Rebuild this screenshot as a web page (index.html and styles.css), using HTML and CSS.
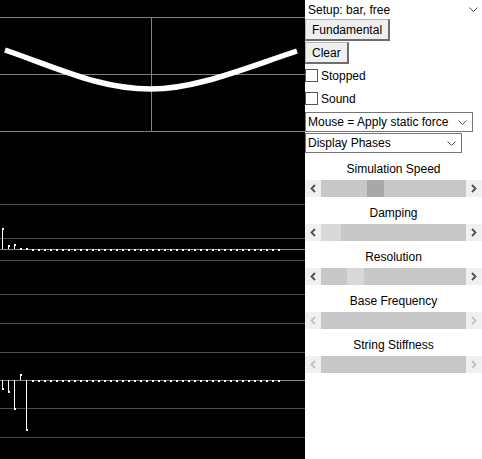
FILE: index.html
```html
<!DOCTYPE html>
<html lang="en">
  <head>
    <meta charset="UTF-8" />
    <title>Bar Waves</title>
    <link rel="stylesheet" href="styles.css">
  </head>
  <body>
    <div class="app">
      <svg class="view" width="305" height="459" viewBox="0 0 305 459" shape-rendering="crispEdges">
        <defs>
          <pattern id="dots" x="32" y="0" width="6" height="2" patternUnits="userSpaceOnUse">
            <rect x="0" y="0" width="2" height="2" fill="#fff" />
          </pattern>
        </defs>
        <rect width="305" height="459" fill="#000" />

        <!-- string view -->
        <rect x="0" y="17" width="305" height="1" fill="#808080" />
        <rect x="0" y="74" width="305" height="1" fill="#808080" />
        <rect x="0" y="131" width="305" height="1" fill="#808080" />
        <rect x="151" y="17" width="1" height="114" fill="#808080" />
        <path shape-rendering="auto" fill="none" stroke="#fff" stroke-width="5.5"
          d="M5 50 C60 69 100 89 151 89 C195 89 240 70 297 51" />

        <!-- magnitudes -->
        <rect x="0" y="204" width="305" height="1" fill="#4c4c4c" />
        <rect x="0" y="238" width="305" height="1" fill="#4c4c4c" />
        <rect x="0" y="260" width="305" height="1" fill="#4c4c4c" />
        <rect x="0" y="294" width="305" height="1" fill="#4c4c4c" />
        <rect x="0" y="249" width="305" height="1" fill="#8a8a8a" />
        <rect x="32" y="249" width="248" height="2" fill="url(#dots)" />
        <rect x="2" y="228" width="1" height="21" fill="#fff" />
        <rect x="2" y="228" width="2" height="2" fill="#fff" />
        <rect x="8" y="245" width="1" height="4" fill="#fff" />
        <rect x="8" y="245" width="2" height="2" fill="#fff" />
        <rect x="14" y="244" width="1" height="5" fill="#fff" />
        <rect x="14" y="244" width="2" height="2" fill="#fff" />
        <rect x="20" y="248" width="2" height="2" fill="#fff" />
        <rect x="26" y="248" width="2" height="2" fill="#fff" />

        <!-- phases -->
        <rect x="0" y="323" width="305" height="1" fill="#4c4c4c" />
        <rect x="0" y="352" width="305" height="1" fill="#4c4c4c" />
        <rect x="0" y="408" width="305" height="1" fill="#4c4c4c" />
        <rect x="0" y="437" width="305" height="1" fill="#4c4c4c" />
        <rect x="0" y="380" width="305" height="1" fill="#8a8a8a" />
        <rect x="32" y="380" width="248" height="2" fill="url(#dots)" />
        <rect x="2" y="380" width="1" height="9" fill="#fff" />
        <rect x="2" y="388" width="2" height="2" fill="#fff" />
        <rect x="8" y="380" width="1" height="12" fill="#fff" />
        <rect x="8" y="391" width="2" height="2" fill="#fff" />
        <rect x="14" y="380" width="1" height="29" fill="#fff" />
        <rect x="14" y="408" width="2" height="2" fill="#fff" />
        <rect x="20" y="374" width="1" height="6" fill="#fff" />
        <rect x="20" y="374" width="2" height="2" fill="#fff" />
        <rect x="26" y="380" width="1" height="50" fill="#fff" />
        <rect x="26" y="429" width="2" height="2" fill="#fff" />
      </svg>

      <div class="panel">
        <div class="dropdown setup">
          <select><option>Setup: bar, free</option></select>
          <svg class="drop-arrow" width="9" height="5" viewBox="0 0 9 5"><path d="M0.5 0.5 L4.5 4.5 L8.5 0.5" fill="none" stroke="#505050" stroke-width="1" /></svg>
        </div>
        <button class="btn">Fundamental</button>
        <button class="btn btn-clear">Clear</button>
        <label class="check"><input type="checkbox" /> Stopped</label>
        <label class="check"><input type="checkbox" /> Sound</label>
        <div class="dropdown mouse">
          <select><option>Mouse = Apply static force</option></select>
          <svg class="drop-arrow" width="9" height="5" viewBox="0 0 9 5"><path d="M0.5 0.5 L4.5 4.5 L8.5 0.5" fill="none" stroke="#505050" stroke-width="1" /></svg>
        </div>
        <div class="dropdown display">
          <select><option>Display Phases</option></select>
          <svg class="drop-arrow" width="9" height="5" viewBox="0 0 9 5"><path d="M0.5 0.5 L4.5 4.5 L8.5 0.5" fill="none" stroke="#505050" stroke-width="1" /></svg>
        </div>

        <div class="label">Simulation Speed</div>
        <div class="scroll">
          <div class="arrow"><svg width="6" height="9" viewBox="0 0 6 9"><path d="M5 1 L1.5 4.5 L5 8" /></svg></div>
          <div class="track"><div class="thumb" style="margin-left: 46px"></div></div>
          <div class="arrow"><svg width="6" height="9" viewBox="0 0 6 9"><path d="M1 1 L4.5 4.5 L1 8" /></svg></div>
        </div>

        <div class="label">Damping</div>
        <div class="scroll">
          <div class="arrow"><svg width="6" height="9" viewBox="0 0 6 9"><path d="M5 1 L1.5 4.5 L5 8" /></svg></div>
          <div class="track"><div class="thumb thumb-light thumb-wide" style="margin-left: 0px"></div></div>
          <div class="arrow"><svg width="6" height="9" viewBox="0 0 6 9"><path d="M1 1 L4.5 4.5 L1 8" /></svg></div>
        </div>

        <div class="label">Resolution</div>
        <div class="scroll">
          <div class="arrow"><svg width="6" height="9" viewBox="0 0 6 9"><path d="M5 1 L1.5 4.5 L5 8" /></svg></div>
          <div class="track"><div class="thumb thumb-light" style="margin-left: 26px"></div></div>
          <div class="arrow"><svg width="6" height="9" viewBox="0 0 6 9"><path d="M1 1 L4.5 4.5 L1 8" /></svg></div>
        </div>

        <div class="label">Base Frequency</div>
        <div class="scroll disabled">
          <div class="arrow"><svg width="6" height="9" viewBox="0 0 6 9"><path d="M5 1 L1.5 4.5 L5 8" /></svg></div>
          <div class="track"></div>
          <div class="arrow"><svg width="6" height="9" viewBox="0 0 6 9"><path d="M1 1 L4.5 4.5 L1 8" /></svg></div>
        </div>

        <div class="label">String Stiffness</div>
        <div class="scroll disabled">
          <div class="arrow"><svg width="6" height="9" viewBox="0 0 6 9"><path d="M5 1 L1.5 4.5 L5 8" /></svg></div>
          <div class="track"></div>
          <div class="arrow"><svg width="6" height="9" viewBox="0 0 6 9"><path d="M1 1 L4.5 4.5 L1 8" /></svg></div>
        </div>
      </div>
    </div>
  </body>
</html>
```

FILE: styles.css
```css
body {
  margin: 0;
  background-color: white;
  color: black;
  font-family: "Liberation Sans", Arial, sans-serif;
  font-size: 12px;
}
.app {
  display: flex;
  width: 482px;
  height: 459px;
  overflow: hidden;
}
.view {
  display: block;
  flex: none;
}
.panel {
  width: 177px;
  display: flex;
  flex-direction: column;
  align-items: flex-start;
}
.dropdown {
  display: flex;
  align-items: center;
  box-sizing: border-box;
  background-color: white;
}
.dropdown select {
  appearance: none;
  -webkit-appearance: none;
  flex: 1;
  min-width: 0;
  border: none;
  background: transparent;
  font-family: inherit;
  font-size: 12px;
  color: black;
  padding: 0 0 0 2px;
  margin: 0;
  outline: none;
}
.setup {
  width: 177px;
  height: 19px;
  padding-left: 1px;
  padding-right: 4px;
}
.mouse {
  width: 168px;
  height: 20px;
  margin-top: 2px;
  border: 1px solid #767676;
  padding-right: 5px;
}
.display {
  width: 157px;
  height: 20px;
  margin-top: 1px;
  border: 1px solid #767676;
  padding-right: 5px;
}
.drop-arrow {
  display: block;
  flex: none;
}
.btn {
  height: 22px;
  padding: 0 6px;
  margin: 0;
  font-family: inherit;
  font-size: 12px;
  color: black;
  background-color: #efefef;
  border-style: solid;
  border-width: 1px 2px 2px 1px;
  border-color: #b4b4b4 #6e6e6e #6e6e6e #b4b4b4;
  border-radius: 0;
}
.btn-clear {
  margin-top: 1px;
}
.check {
  display: flex;
  align-items: center;
  gap: 3px;
  height: 23px;
}
.check input {
  appearance: none;
  -webkit-appearance: none;
  width: 13px;
  height: 13px;
  margin: 0;
  border: 1px solid #555;
  background-color: white;
  border-radius: 0;
}
.label {
  align-self: stretch;
  text-align: center;
  line-height: 16px;
  padding-top: 8px;
  padding-bottom: 3px;
}
.scroll {
  align-self: stretch;
  display: flex;
  height: 17px;
}
.arrow {
  width: 16px;
  flex: none;
  display: flex;
  align-items: center;
  justify-content: center;
  background-color: #f0f0f0;
}
.arrow path {
  fill: none;
  stroke: #505050;
  stroke-width: 1.8;
}
.track {
  flex: 1;
  display: flex;
  background-color: #c8c8c8;
}
.thumb {
  width: 17px;
  background-color: #a8a8a8;
}
.thumb-light {
  background-color: #d8d8d8;
}
.thumb-wide {
  width: 20px;
}
.disabled .arrow path {
  stroke: #c2c2c2;
}
```
